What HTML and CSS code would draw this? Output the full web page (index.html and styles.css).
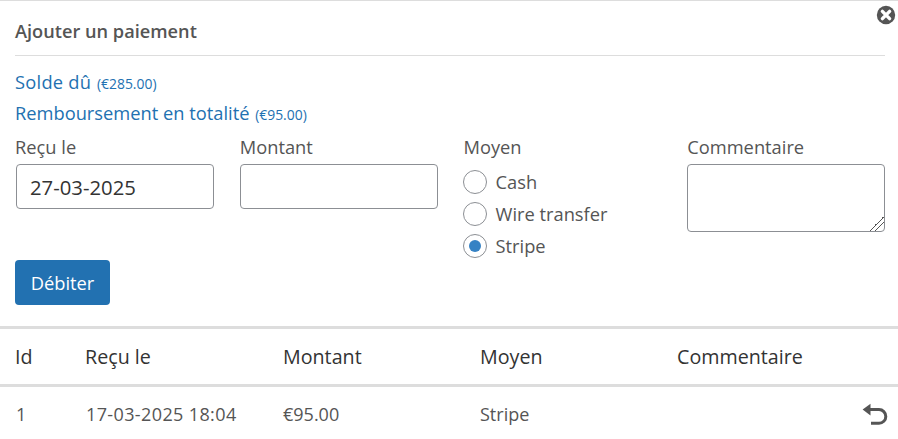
FILE: index.html
```html
<!DOCTYPE html>
<html lang="fr">
<head>
<meta charset="utf-8">
<title>Ajouter un paiement</title>
<link rel="stylesheet" href="styles.css">
</head>
<body>
<section class="panel">
  <button class="close" type="button" aria-label="Fermer">
    <svg viewBox="0 0 20 20" width="20" height="20"><circle cx="10" cy="10" r="9.2" fill="#555"/><path d="M6.4 6.4l7.2 7.2M13.6 6.4l-7.2 7.2" stroke="#fff" stroke-width="3.4" stroke-linecap="round"/></svg>
  </button>
  <h2 class="title">Ajouter un paiement</h2>
  <div class="links">
    <p><a class="solde" href="#">Solde dû</a> <small>(€285.00)</small></p>
    <p><a href="#">Remboursement en totalité</a> <small>(€95.00)</small></p>
  </div>
  <form class="form">
    <div class="field">
      <label class="label near" for="recu">Reçu le</label>
      <input id="recu" class="control date" type="text" value="27-03-2025">
    </div>
    <div class="field">
      <label class="label" for="montant">Montant</label>
      <input id="montant" class="control" type="text">
    </div>
    <div class="field">
      <span class="label">Moyen</span>
      <label class="radio"><input type="radio" name="moyen"><span>Cash</span></label>
      <label class="radio"><input type="radio" name="moyen"><span>Wire transfer</span></label>
      <label class="radio"><input type="radio" name="moyen" checked><span>Stripe</span></label>
    </div>
    <div class="field">
      <label class="label" for="commentaire">Commentaire</label>
      <textarea id="commentaire" class="control area"></textarea>
    </div>
  </form>
  <button class="submit" type="button">Débiter</button>
</section>
<table class="table">
  <thead>
    <tr><th class="c-id near-cell">Id</th><th class="c-col near-cell">Reçu le</th><th class="c-col">Montant</th><th class="c-col">Moyen</th><th>Commentaire</th><th class="c-act"></th></tr>
  </thead>
  <tbody>
    <tr>
      <td>1</td><td class="stamp">17-03-2025 18:04</td><td>€95.00</td><td>Stripe</td><td></td>
      <td class="c-act"><svg class="undo" viewBox="0 0 26 22" width="26" height="22"><path d="M8.5 .8L.6 6.6l7.9 5.8z" fill="#555"/><path d="M7 6.6h10a6.8 6.8 0 0 1 0 13.6H9" fill="none" stroke="#555" stroke-width="3"/></svg></td>
    </tr>
  </tbody>
</table>
</body>
</html>
```
FILE: styles.css
```css
* { box-sizing: border-box; }
html, body { height: 100%; }
body {
  margin: 0;
  overflow: hidden;
  background: #fff;
  color: #555;
  font: 18.3px/1.5 "Open Sans", "Noto Sans", sans-serif;
  border-top: 1px solid #ddd;
}
.panel { position: relative; padding: 0 13px 0 15px; }
.close {
  position: absolute;
  top: 4px;
  right: 2px;
  padding: 0;
  border: 0;
  background: none;
  line-height: 0;
}
.title {
  margin: 0;
  padding: 15px 0 9px;
  font-size: 18.2px;
  line-height: 30px;
  font-weight: 600;
  border-bottom: 1px solid #ddd;
}
.links { padding-top: 10px; }
.links p { margin: 0; height: 31px; line-height: 31px; }
.links a { color: #2271b1; text-decoration: none; }
.links .solde { letter-spacing: .25px; }
.links small { margin-left: 1px; font-size: 13.9px; color: #2271b1; }
.form {
  display: grid;
  grid-template-columns: repeat(4, 198px);
  column-gap: 25.75px;
  padding-left: 1px;
  margin-top: 4px;
}
.field { display: flex; flex-direction: column; align-items: flex-start; }
.label { display: block; height: 30px; line-height: 30px; }
.near { margin-left: -1px; }
.control {
  display: block;
  width: 198px;
  height: 45px;
  margin-top: 2px;
  padding: 0 13px;
  border: 1px solid #8c8f94;
  border-radius: 4px;
  background: #fff;
  color: #333;
  font: inherit;
}
.date { font-size: 20.3px; }
.area { height: 68px; resize: vertical; }
.area::-webkit-resizer {
  background: linear-gradient(135deg, transparent 50%, #555 50% 56%, transparent 56% 67%, #555 67% 73%, transparent 73%);
}
.radio { display: flex; align-items: center; gap: 9px; height: 32px; margin-left: -1px; }
.radio:first-of-type { margin-top: 4px; }
.radio input {
  appearance: none;
  width: 24px;
  height: 24px;
  margin: 0;
  border: 1px solid #8c8f94;
  border-radius: 50%;
  background: #fff;
  display: grid;
  place-items: center;
}
.radio input:checked::before {
  content: "";
  width: 12px;
  height: 12px;
  border-radius: 50%;
  background: #3582c4;
}
.submit {
  display: block;
  margin-top: -2px;
  width: 95px;
  height: 45px;
  border: 0;
  border-radius: 4px;
  background: #2271b1;
  color: #fff;
  font: inherit;
}
.table {
  width: 898px;
  margin-top: 21px;
  border-collapse: collapse;
  table-layout: fixed;
  font-size: 18px;
}
.table th, .table td { padding: 0 0 0 16px; text-align: left; font-weight: 400; }
.table th {
  height: 58px;
  color: #333;
  font-size: 19.7px;
  border-top: 3px solid #ddd;
  border-bottom: 3px solid #ddd;
}
.table .near-cell { padding-left: 15px; }
.table td { height: 56px; }
.table .stamp { letter-spacing: .38px; }
.c-id { width: 70px; }
.c-col { width: 197px; }
.c-act { width: 50px; }
.table .c-act { padding: 0 10px 0 0; text-align: right; }
.undo { display: block; margin-left: auto; }
```
